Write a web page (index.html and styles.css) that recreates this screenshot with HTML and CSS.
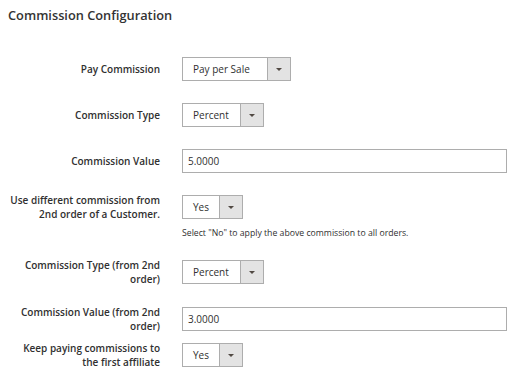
FILE: index.html
```html
<!DOCTYPE html>
<html>
<head>
<meta charset="utf-8">
<link rel="stylesheet" href="styles.css">
</head>
<body>
<div class="page">
  <h2 class="title">Commission Configuration</h2>
  <div class="form">
    <div class="row r1">
      <div class="label">Pay Commission</div>
      <div class="control">
        <div class="select w-lg"><span class="value">Pay per Sale</span><span class="arrow"></span></div>
      </div>
    </div>
    <div class="row">
      <div class="label">Commission Type</div>
      <div class="control">
        <div class="select w-md"><span class="value">Percent</span><span class="arrow"></span></div>
      </div>
    </div>
    <div class="row">
      <div class="label">Commission Value</div>
      <div class="control">
        <div class="input">5.0000</div>
      </div>
    </div>
    <div class="row top">
      <div class="label two">Use different commission from 2nd order of a Customer.</div>
      <div class="control">
        <div class="select w-sm"><span class="value">Yes</span><span class="arrow"></span></div>
        <div class="note">Select "No" to apply the above commission to all orders.</div>
      </div>
    </div>
    <div class="row r5">
      <div class="label two">Commission Type (from 2nd order)</div>
      <div class="control">
        <div class="select w-md"><span class="value">Percent</span><span class="arrow"></span></div>
      </div>
    </div>
    <div class="row r6">
      <div class="label two">Commission Value (from 2nd order)</div>
      <div class="control">
        <div class="input">3.0000</div>
      </div>
    </div>
    <div class="row r7">
      <div class="label two">Keep paying commissions to the first affiliate</div>
      <div class="control">
        <div class="select w-sm"><span class="value">Yes</span><span class="arrow"></span></div>
      </div>
    </div>
  </div>
</div>
</body>
</html>
```

FILE: styles.css
```css
* { box-sizing: border-box; }
html, body { margin: 0; padding: 0; background: #fff; }
body {
  font-family: "Open Sans", "Liberation Sans", sans-serif;
  color: #303030;
}
.page { padding: 7px 0 0 8px; width: 531px; }
.title {
  margin: 0;
  font-size: 12.8px;
  font-weight: 600;
  line-height: 16px;
  color: #333;
}
.form { margin-top: 34px; display: flex; flex-direction: column; }
.row {
  display: flex;
  align-items: center;
  margin-bottom: 22px;
}
.row.top { align-items: flex-start; }
.row.r5 { margin-top: -4px; margin-bottom: 19px; }
.row.r6 { margin-bottom: 8px; }
.label {
  width: 152px;
  text-align: right;
  font-size: 10px;
  font-weight: 600;
  line-height: 14px;
  color: #303030;
  flex: none;
}
.row.top .label { margin-top: -2px; }
.control { margin-left: 22px; display: flex; flex-direction: column; align-items: flex-start; }
.select {
  display: flex;
  height: 24px;
  border: 1px solid #adadad;
  background: #fff;
  font-size: 10px;
  line-height: 22px;
  color: #303030;
}
.select .value { flex: 1; padding-left: 10px; }
.select .arrow {
  width: 23px;
  flex: none;
  border-left: 1px solid #adadad;
  background: #e3e3e3;
  position: relative;
}
.select .arrow::after {
  content: "";
  position: absolute;
  left: 50%;
  top: 50%;
  margin-left: -3px;
  margin-top: -1px;
  border-left: 3px solid transparent;
  border-right: 3px solid transparent;
  border-top: 3px solid #514943;
}
.w-lg { width: 109px; }
.w-md { width: 82px; }
.w-sm { width: 61px; }
.input {
  width: 325px;
  height: 24px;
  border: 1px solid #adadad;
  padding-left: 5px;
  font-size: 10px;
  line-height: 22px;
  color: #303030;
}
.note {
  margin-top: 7px;
  font-size: 8.7px;
  line-height: 14px;
  color: #303030;
}
```
